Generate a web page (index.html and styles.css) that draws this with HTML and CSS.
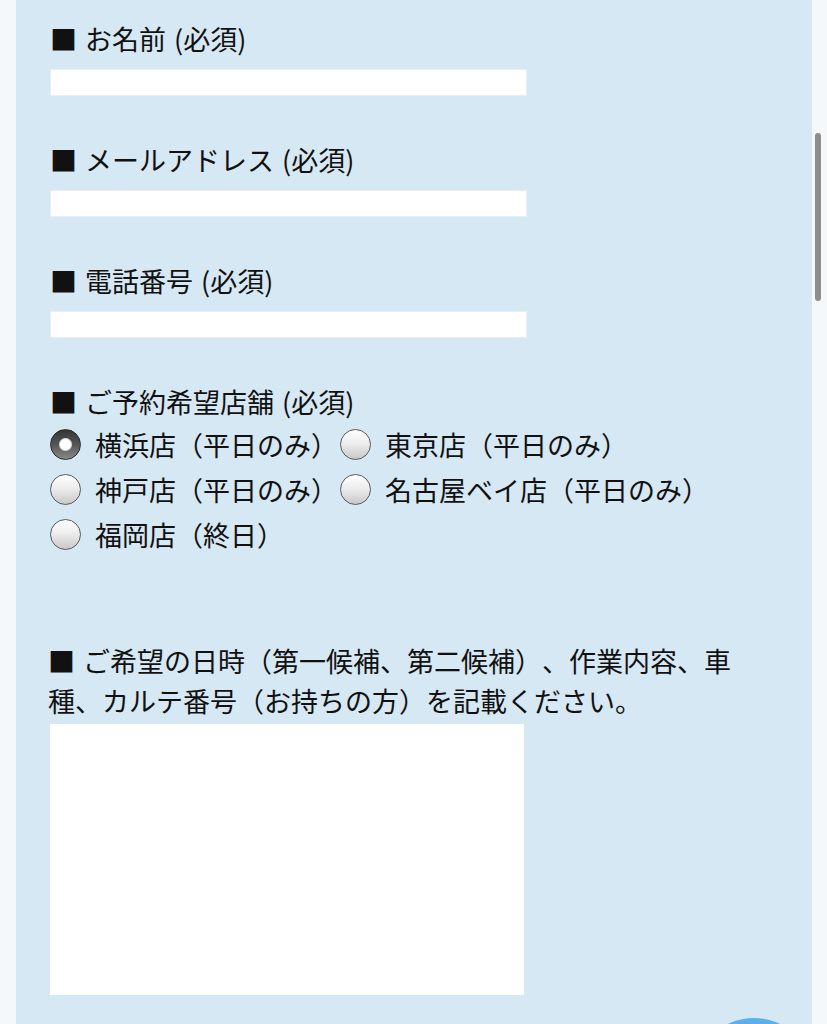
FILE: index.html
```html
<!DOCTYPE html>
<html lang="ja">
<head>
<meta charset="utf-8">
<link rel="stylesheet" href="styles.css">
</head>
<body>
<main class="panel">
  <form class="form">
    <div class="field">
      <div class="label">■ お名前 (必須)</div>
      <input class="text-input" type="text">
    </div>
    <div class="field">
      <div class="label">■ メールアドレス (必須)</div>
      <input class="text-input" type="text">
    </div>
    <div class="field">
      <div class="label">■ 電話番号 (必須)</div>
      <input class="text-input" type="text">
    </div>
    <div class="field field-radio">
      <div class="label">■ ご予約希望店舗 (必須)</div>
      <div class="radios">
        <label class="radio"><input type="radio" name="shop" checked><span>横浜店（平日のみ）</span></label>
        <label class="radio"><input type="radio" name="shop"><span>東京店（平日のみ）</span></label>
        <label class="radio"><input type="radio" name="shop"><span>神戸店（平日のみ）</span></label>
        <label class="radio"><input type="radio" name="shop"><span>名古屋ベイ店（平日のみ）</span></label>
        <label class="radio"><input type="radio" name="shop"><span>福岡店（終日）</span></label>
      </div>
    </div>
    <div class="field field-note">
      <div class="label">■ ご希望の日時（第一候補、第二候補）、作業内容、車種、カルテ番号（お持ちの方）を記載ください。</div>
      <textarea class="textarea"></textarea>
    </div>
  </form>
</main>
<div class="scrollbar"></div>
<div class="fab"></div>
</body>
</html>
```
FILE: styles.css
```css
html, body {
  margin: 0;
  padding: 0;
}
body {
  background: #f4f8fb;
  width: 827px;
  height: 1024px;
  overflow: hidden;
  position: relative;
  font-family: "Noto Sans CJK JP", "Noto Sans", sans-serif;
  color: #111;
  text-spacing-trim: space-all;
}
.panel {
  margin-left: 16px;
  width: 796px;
  min-height: 1100px;
  background: #d6e8f3;
  box-sizing: border-box;
  padding: 19px 64px 0 32px;
}
.form {
  display: flex;
  flex-direction: column;
}
.field {
  margin-bottom: 44px;
}
.label {
  font-size: 27px;
  line-height: 40px;
  padding-left: 2px;
  word-spacing: 2px;
}
.field-note .label {
  padding-left: 0;
  word-spacing: 2px;
}
.text-input {
  display: block;
  box-sizing: border-box;
  margin: 10px 0 0 2px;
  width: 477px;
  height: 27px;
  border: 1px solid #e8eff4;
  background: #fff;
  padding: 0;
}
.field-radio {
  margin-bottom: 84px;
}
.radios {
  display: flex;
  flex-wrap: wrap;
  padding-left: 2px;
}
.radio {
  display: flex;
  align-items: center;
  height: 45px;
  line-height: 45px;
  font-size: 27px;
  margin-right: 2px;
}
.radio input {
  appearance: none;
  -webkit-appearance: none;
  margin: 0 14px 0 0;
  width: 31px;
  height: 31px;
  border-radius: 50%;
  box-sizing: border-box;
  border: 1.5px solid #5a5a5a;
  background: linear-gradient(#ffffff 0%, #ededed 45%, #c9c9c9 100%);
  flex: none;
}
.radio input:checked {
  border-color: #2a2a2a;
  background:
    radial-gradient(circle, #ffffff 0 5px, #d0d0d0 6px, transparent 7px),
    linear-gradient(#353535 0%, #555555 50%, #8a8a8a 100%);
}
.textarea {
  display: block;
  box-sizing: border-box;
  margin: 3px 0 0 2px;
  width: 474px;
  height: 271px;
  border: none;
  background: #fff;
  resize: none;
}
.scrollbar {
  position: absolute;
  left: 815px;
  top: 133px;
  width: 6px;
  height: 168px;
  border-radius: 3px;
  background: #8d8d8d;
}
.fab {
  position: absolute;
  left: 694px;
  top: 1018px;
  width: 120px;
  height: 120px;
  border-radius: 50%;
  background: #5cb0ea;
}
```
